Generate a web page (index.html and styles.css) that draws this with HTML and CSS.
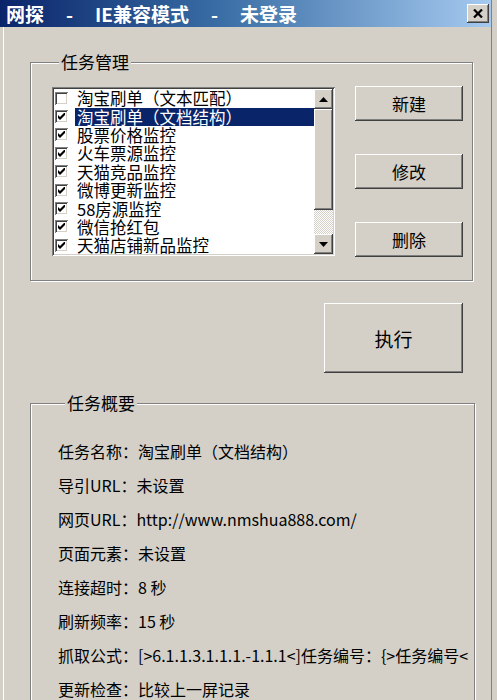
FILE: index.html
```html
<!DOCTYPE html>
<html lang="zh-CN">
<head>
    <meta charset="UTF-8">
    <meta name="viewport" content="width=device-width, initial-scale=1.0">
    <title>网探 - IE兼容模式 - 未登录</title>
    <link rel="stylesheet" href="styles.css">
</head>
<body>
    <div class="window">
        <div class="titlebar">
            <div class="title">
                <span>网探</span>
                <span>-</span>
                <span>IE兼容模式</span>
                <span>-</span>
                <span>未登录</span>
            </div>
            <div class="close-btn">
                <svg width="10" height="9" viewBox="0 0 10 9">
                    <path d="M1 0.5 L9 8.5 M9 0.5 L1 8.5" stroke="#000" stroke-width="2.2"/>
                </svg>
            </div>
        </div>

        <div class="client">
            <!-- 任务管理 -->
            <div class="group group-tasks">
                <div class="group-title">任务管理</div>
                <div class="task-row">
                    <div class="listbox">
                        <ul class="task-list">
                            <li><span class="check"></span><span class="name">淘宝刷单（文本匹配）</span></li>
                            <li class="selected"><span class="check checked"></span><span class="name">淘宝刷单（文档结构）</span></li>
                            <li><span class="check checked"></span><span class="name">股票价格监控</span></li>
                            <li><span class="check checked"></span><span class="name">火车票源监控</span></li>
                            <li><span class="check checked"></span><span class="name">天猫竞品监控</span></li>
                            <li><span class="check checked"></span><span class="name">微博更新监控</span></li>
                            <li><span class="check checked"></span><span class="name">58房源监控</span></li>
                            <li><span class="check checked"></span><span class="name">微信抢红包</span></li>
                            <li><span class="check checked"></span><span class="name">天猫店铺新品监控</span></li>
                        </ul>
                        <div class="scrollbar">
                            <div class="sb-btn">
                                <svg width="9" height="5" viewBox="0 0 9 5"><path d="M4.5 0 L9 5 L0 5 Z" fill="#000"/></svg>
                            </div>
                            <div class="sb-thumb"></div>
                            <div class="sb-track"></div>
                            <div class="sb-btn">
                                <svg width="9" height="5" viewBox="0 0 9 5"><path d="M0 0 L9 0 L4.5 5 Z" fill="#000"/></svg>
                            </div>
                        </div>
                    </div>
                    <div class="task-buttons">
                        <button class="btn">新建</button>
                        <button class="btn">修改</button>
                        <button class="btn">删除</button>
                    </div>
                </div>
            </div>

            <div class="run-row">
                <button class="btn btn-run">执行</button>
            </div>

            <!-- 任务概要 -->
            <div class="group group-summary">
                <div class="group-title">任务概要</div>
                <ul class="summary">
                    <li>任务名称：淘宝刷单（文档结构）</li>
                    <li>导引URL：未设置</li>
                    <li>网页URL：http://www.nmshua888.com/</li>
                    <li>页面元素：未设置</li>
                    <li>连接超时：8 秒</li>
                    <li>刷新频率：15 秒</li>
                    <li>抓取公式：[&gt;6.1.1.3.1.1.1.-1.1.1&lt;]任务编号：{&gt;任务编号&lt;</li>
                    <li>更新检查：比较上一屏记录</li>
                </ul>
            </div>
        </div>
    </div>
</body>
</html>
```

FILE: styles.css
```css
body {
    margin: 0;
    background-color: #d4d0c8;
    font-family: "Noto Sans CJK SC", "Liberation Sans", sans-serif;
    color: #000;
    overflow: hidden;
}

.window {
    width: 491px;
    height: 700px;
    border-right: 1px solid #808080;
    background-color: #d4d0c8;
}

.titlebar {
    height: 27px;
    display: flex;
    align-items: center;
    justify-content: space-between;
    padding: 0 2px 0 6px;
    background: linear-gradient(to right, #0a246a 0%, #3a6ea5 45%, #a6caf0 100%);
}

.title {
    display: flex;
    gap: 22px;
    color: #fff;
    font-size: 19px;
    font-weight: bold;
    line-height: 27px;
}

.close-btn {
    width: 22px;
    height: 19px;
    display: flex;
    align-items: center;
    justify-content: center;
    background-color: #d4d0c8;
    box-shadow: inset -1px -1px #404040, inset 1px 1px #fff, inset -2px -2px #808080;
}

.client {
    padding: 35px 0 0 30px;
    box-shadow: inset 3px 0 #d4d0c8, inset 4px 0 #fff;
}

/* group box */
.group {
    width: 441px;
    border: 1px solid #808080;
    box-shadow: inset 1px 1px #fff, 1px 1px #fff;
}

.group-title {
    display: table;
    margin: -11px 0 0 7px;
    padding: 0 2px;
    background-color: #d4d0c8;
    font-size: 17px;
    line-height: 20px;
}

.group-tasks {
    padding: 0 9px 23px 21px;
    width: 411px;
}

.task-row {
    display: flex;
    gap: 20px;
    margin-top: 15px;
}

/* list box */
.listbox {
    width: 283px;
    height: 169px;
    box-sizing: border-box;
    padding: 2px;
    display: flex;
    background-color: #fff;
    box-shadow: inset 1px 1px #808080, inset -1px -1px #fff, inset 2px 2px #404040, inset -2px -2px #d4d0c8;
}

.task-list {
    list-style: none;
    margin: 0;
    padding: 0 0 0 1px;
    flex: 1;
}

.task-list li {
    height: 18.4px;
    display: flex;
    align-items: center;
    font-size: 16.5px;
    line-height: 18px;
}

.check {
    width: 13px;
    height: 13px;
    flex: none;
    box-sizing: border-box;
    background-color: #fff;
    box-shadow: inset 1px 1px #808080, inset -1px -1px #fff, inset 2px 2px #404040, inset -2px -2px #d4d0c8;
}

.check.checked {
    background-image: url("data:image/svg+xml,%3Csvg xmlns='http://www.w3.org/2000/svg' width='7' height='7' viewBox='0 0 7 7'%3E%3Cpath d='M0 2 L2 4 L7 -1 L7 2 L2 7 L0 5 Z' fill='%23000'/%3E%3C/svg%3E");
    background-repeat: no-repeat;
    background-position: 3px 3px;
}

.name {
    flex: 1;
    margin-left: 7px;
    padding-left: 2px;
    white-space: nowrap;
}

.selected .name {
    background-color: #0a246a;
    color: #fff;
}

/* scroll bar */
.scrollbar {
    width: 19px;
    display: flex;
    flex-direction: column;
}

.sb-btn {
    height: 20px;
    display: flex;
    align-items: center;
    justify-content: center;
    background-color: #d4d0c8;
    box-shadow: inset -1px -1px #404040, inset 1px 1px #fff, inset -2px -2px #808080;
}

.sb-thumb {
    height: 101px;
    background-color: #d4d0c8;
    box-shadow: inset -1px -1px #404040, inset 1px 1px #fff, inset -2px -2px #808080;
}

.sb-track {
    flex: 1;
    background: repeating-conic-gradient(#fff 0 25%, #d4d0c8 0 50%) 0 0 / 2px 2px;
}

/* buttons */
.btn {
    font-family: "Noto Sans CJK SC", "Liberation Sans", sans-serif;
    font-size: 17px;
    color: #000;
    background-color: #d4d0c8;
    border: none;
    padding: 0;
    box-shadow: inset -1px -1px #404040, inset 1px 1px #fff, inset -2px -2px #808080;
}

.task-buttons {
    display: flex;
    flex-direction: column;
    gap: 33px;
    margin-top: -1px;
}

.task-buttons .btn {
    width: 108px;
    height: 35px;
}

.run-row {
    padding: 22px 0 0 294px;
}

.btn-run {
    width: 139px;
    height: 70px;
    font-size: 19px;
}

/* summary */
.group-summary {
    margin-top: 30px;
    height: 400px;
    padding: 0 3px 0 27px;
    width: 413px;
}

.summary {
    list-style: none;
    margin: 21px 0 0;
    padding: 0;
}

.summary li {
    font-size: 16px;
    line-height: 34px;
    white-space: nowrap;
    overflow: hidden;
}
```
